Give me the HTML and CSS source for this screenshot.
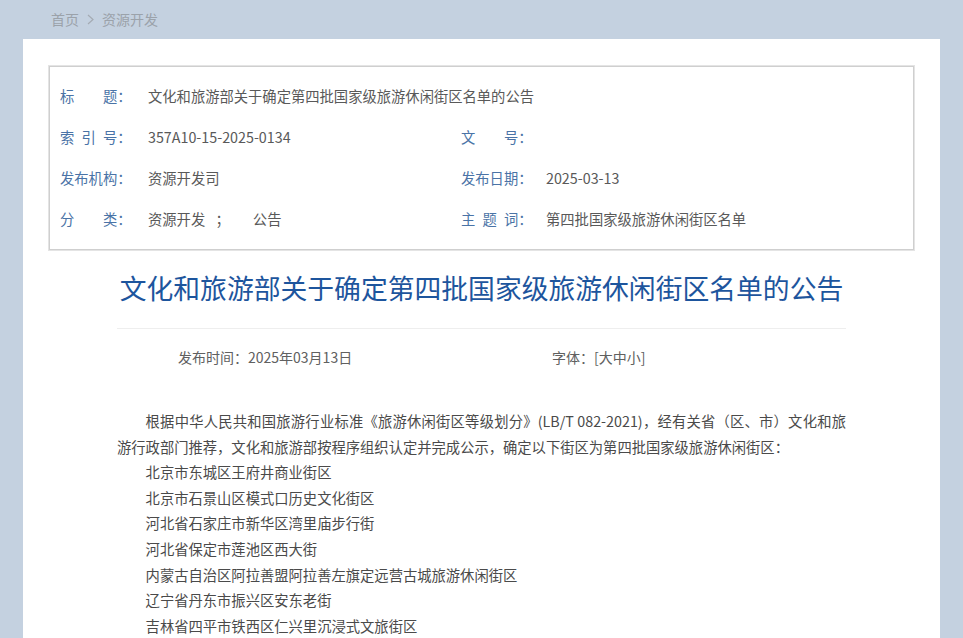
FILE: index.html
```html
<!DOCTYPE html>
<html lang="zh-CN">

<head>
    <meta charset="utf-8">
    <meta name="viewport" content="width=device-width, initial-scale=1.0">
    <title>文化和旅游部关于确定第四批国家级旅游休闲街区名单的公告</title>
    <link rel="stylesheet" href="styles.css">
</head>

<body>
    <div class="crumbs">
        <span>首页</span>
        <svg class="chev" width="7" height="11" viewBox="0 0 7 11"><path d="M1 1 L6 5.5 L1 10" fill="none" stroke="#a4abb3" stroke-width="1.2"/></svg>
        <span>资源开发</span>
    </div>

    <div class="panel">
        <div class="meta">
            <div class="row">
                <span class="lb">标　　题：</span>
                <span class="val">文化和旅游部关于确定第四批国家级旅游休闲街区名单的公告</span>
            </div>
            <div class="row two">
                <div class="cell">
                    <span class="lb">索&ensp;引&ensp;号：</span>
                    <span class="val">357A10-15-2025-0134</span>
                </div>
                <div class="cell">
                    <span class="lb lb-r">文　　号：</span>
                    <span class="val"></span>
                </div>
            </div>
            <div class="row two">
                <div class="cell">
                    <span class="lb">发布机构：</span>
                    <span class="val">资源开发司</span>
                </div>
                <div class="cell">
                    <span class="lb lb-r">发布日期：</span>
                    <span class="val">2025-03-13</span>
                </div>
            </div>
            <div class="row two">
                <div class="cell">
                    <span class="lb">分　　类：</span>
                    <span class="val">资源开发&ensp;&nbsp;；<span class="gap"></span>公告</span>
                </div>
                <div class="cell">
                    <span class="lb lb-r">主&ensp;题&ensp;词：</span>
                    <span class="val">第四批国家级旅游休闲街区名单</span>
                </div>
            </div>
        </div>

        <div class="article">
            <h1>文化和旅游部关于确定第四批国家级旅游休闲街区名单的公告</h1>
            <div class="publine">
                <span class="pubdate">发布时间：2025年03月13日</span>
                <span class="fsize">字体：[大中小]</span>
            </div>
            <div class="content">
                <p>根据中华人民共和国旅游行业标准《旅游休闲街区等级划分》(LB/T 082-2021)，经有关省（区、市）文化和旅游行政部门推荐，文化和旅游部按程序组织认定并完成公示，确定以下街区为第四批国家级旅游休闲街区：</p>
                <p>北京市东城区王府井商业街区</p>
                <p>北京市石景山区模式口历史文化街区</p>
                <p>河北省石家庄市新华区湾里庙步行街</p>
                <p>河北省保定市莲池区西大街</p>
                <p>内蒙古自治区阿拉善盟阿拉善左旗定远营古城旅游休闲街区</p>
                <p>辽宁省丹东市振兴区安东老街</p>
                <p>吉林省四平市铁西区仁兴里沉浸式文旅街区</p>
            </div>
        </div>
    </div>
</body>

</html>
```

FILE: styles.css
```css
body {
    margin: 0;
    padding: 0;
    background-color: #c4d1e0;
    font-family: "Noto Sans CJK SC", "Liberation Sans", sans-serif;
    color: #555;
    overflow: hidden;
}

/************ Brødkrumme ************/

.crumbs {
    height: 38px;
    padding-bottom: 1px;
    padding-left: 51px;
    display: flex;
    align-items: center;
    gap: 8px;
    font-size: 14px;
    color: #9ba2aa;
}

.chev {
    display: block;
}

/************ Panel ************/

.panel {
    background-color: white;
    margin: 0 23px;
    padding: 27px 26px 40px;
    width: 865px;
}

.meta {
    border: 1px solid #cfcfcf;
    box-shadow: 0 0 0 1px #e4e4e4;
    padding: 8px 10px 10px;
    font-size: 14.3px;
}

.row {
    display: flex;
    align-items: center;
    height: 41px;
}

.row.two .cell {
    display: flex;
    align-items: center;
}

.row.two .cell:first-child {
    width: 401px;
}

.lb {
    color: #4a73a6;
    width: 88px;
    flex: none;
    white-space: pre;
}

.lb-r {
    width: 85px;
}

.val {
    color: #595959;
}

.gap {
    display: inline-block;
    width: 23px;
}

/************ Artikel ************/

.article {
    margin: 0 68px;
}

h1 {
    margin: 18px 0 0;
    padding-bottom: 20px;
    border-bottom: 1px solid #eeeeee;
    font-size: 26.8px;
    line-height: 40px;
    font-weight: normal;
    color: #1d559d;
    text-align: center;
    white-space: nowrap;
}

.publine {
    display: flex;
    margin-top: 18px;
    padding-left: 61px;
    line-height: 20px;
    font-size: 14px;
    color: #606060;
}

.pubdate {
    width: 374px;
}

.content {
    margin-top: 41px;
    font-size: 14.3px;
    line-height: 25.6px;
    color: #4a4a4a;
}

.content p {
    margin: 0;
    text-indent: 2em;
    text-align: justify;
}
```
